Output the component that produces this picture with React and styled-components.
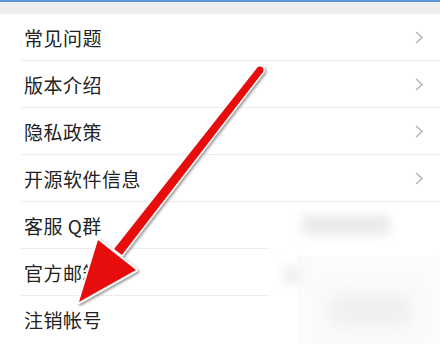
import styled, { createGlobalStyle } from 'styled-components';

const GlobalStyle = createGlobalStyle`
  html, body { margin: 0; padding: 0; background: #fff; }
  body { width: 440px; height: 344px; overflow: hidden; }
`;

const items = [
  { label: '常见问题', arrow: true },
  { label: '版本介绍', arrow: true },
  { label: '隐私政策', arrow: true },
  { label: '开源软件信息', arrow: true },
  { label: '客服 Q群' },
  { label: '官方邮箱' },
  { label: '注销帐号' },
];

const Screen = styled.div`
  position: relative;
  width: 440px;
  height: 344px;
  overflow: hidden;
  background: #fff;
  font-family: "Noto Sans CJK SC", "Noto Sans", sans-serif;
`;

const TopBand = styled.div`
  height: 12px;
  border-top: 2px solid #5b93d6;
  background: #eceef0;
`;

const List = styled.ul`
  list-style: none;
  margin: 0;
  padding: 0 0 0 21px;
`;

const Row = styled.li`
  display: flex;
  align-items: center;
  justify-content: space-between;
  height: 46px;
  border-bottom: ${p => (p.$last ? 'none' : '1px solid #ececec')};
  padding: 0 16px 0 3px;
`;

const Label = styled.span`
  font-size: 19px;
  color: #222;
  letter-spacing: 0.5px;
`;

const Chevron = () => (
  <svg width="10" height="13" viewBox="0 0 10 13">
    <path d="M2 1 L8 6.5 L2 12" fill="none" stroke="#b3b3b3" strokeWidth="1.4" />
  </svg>
);

// blurred-out patch over the lower right of the list
const Mosaic = styled.div`
  position: absolute;
  left: 268px;
  top: 206px;
  right: 0;
  bottom: 0;
`;

const Haze = styled.div`
  position: absolute;
  inset: 0;
  background: #fff;
  filter: blur(3px);
`;

const Smudge = styled.div`
  position: absolute;
  left: ${p => p.$x}px;
  top: ${p => p.$y}px;
  width: ${p => p.$w}px;
  height: ${p => p.$h}px;
  background: ${p => p.$bg};
  filter: blur(${p => p.$blur}px);
`;

const Panel = styled.div`
  position: absolute;
  left: 29px;
  top: 50px;
  right: 0;
  bottom: 0;
  background: #fbfbfb;
`;

const ArrowLayer = styled.svg`
  position: absolute;
  inset: 0;
`;

const shaft = '262.8,72.2 121.9,255.1 114.1,248.9 257.2,67.8';
const head = '79,302 98,240 136,270';

const App = () => (
  <Screen>
    <GlobalStyle />
    <TopBand />
    <List>
      {items.map((it, i) => (
        <Row key={it.label} $last={i === items.length - 1}>
          <Label>{it.label}</Label>
          {it.arrow && <Chevron />}
        </Row>
      ))}
    </List>

    <Mosaic>
      <Haze />
      <Smudge $x={34} $y={9} $w={88} $h={20} $bg="#ebebeb" $blur={5} />
      <Panel />
      <Smudge $x={15} $y={60} $w={16} $h={18} $bg="#f0f0f0" $blur={5} />
      <Smudge $x={62} $y={89} $w={80} $h={30} $bg="#efefef" $blur={8} />
    </Mosaic>

    <ArrowLayer width="440" height="344" viewBox="0 0 440 344">
      <defs>
        <filter id="sh" x="-20%" y="-20%" width="140%" height="140%">
          <feDropShadow dx="1.5" dy="1.5" stdDeviation="1" floodColor="#555" floodOpacity="0.6" />
        </filter>
      </defs>
      <g filter="url(#sh)">
        <g fill="#fff" stroke="#fff" strokeWidth="3" strokeLinejoin="round">
          <polygon points={shaft} />
          <circle cx="260" cy="70" r="3.5" />
          <polygon points={head} strokeWidth="4" />
        </g>
        <g fill="#e8100f">
          <polygon points={shaft} />
          <circle cx="260" cy="70" r="3.5" />
          <polygon points={head} />
        </g>
      </g>
    </ArrowLayer>
  </Screen>
);

export default App;
